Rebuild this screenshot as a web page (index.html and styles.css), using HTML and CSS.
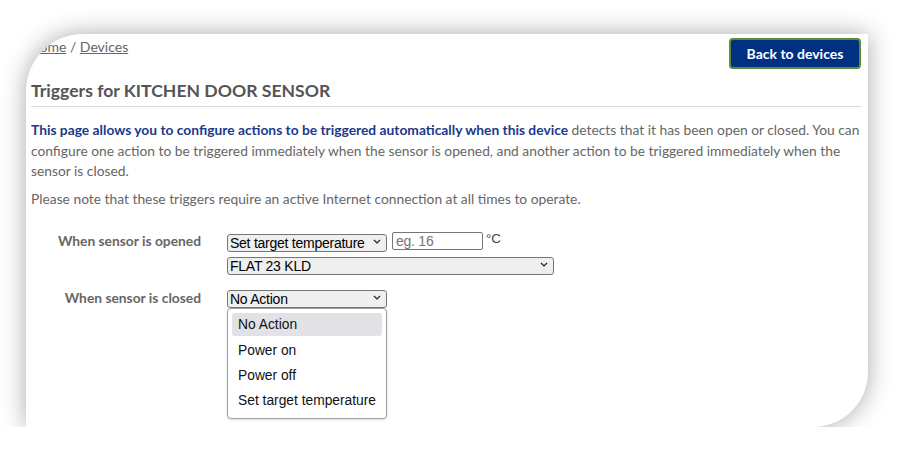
FILE: index.html
```html
<!DOCTYPE html>
<html lang="en">
<head>
<meta charset="utf-8">
<title>Triggers for KITCHEN DOOR SENSOR</title>
<link rel="stylesheet" href="styles.css">
</head>
<body>
<div class="card">
  <div class="topbar">
    <nav class="crumbs"><a href="#">Home</a> / <a href="#">Devices</a></nav>
    <button class="back" type="button">Back to devices</button>
  </div>
  <h1 class="title">Triggers for KITCHEN DOOR SENSOR</h1>
  <p class="intro"><strong>This page allows you to configure actions to be triggered automatically when this device</strong> detects that it has been open or closed. You can configure one action to be triggered immediately when the sensor is opened, and another action to be triggered immediately when the sensor is closed.</p>
  <p class="note">Please note that these triggers require an active Internet connection at all times to operate.</p>

  <div class="form">
    <label class="lbl">When sensor is opened</label>
    <div class="fields">
      <div class="line">
        <span class="sel w160"><select><option>Set target temperature</option></select><svg class="chev" viewBox="0 0 8 5" width="8" height="5"><path d="M1 1l3 3 3-3" fill="none" stroke="#222" stroke-width="1.2"/></svg></span>
        <input class="num" type="text" placeholder="eg. 16">
        <span class="unit">°C</span>
      </div>
      <span class="sel w327"><select><option>FLAT 23 KLD</option></select><svg class="chev" viewBox="0 0 8 5" width="8" height="5"><path d="M1 1l3 3 3-3" fill="none" stroke="#222" stroke-width="1.2"/></svg></span>
    </div>

    <label class="lbl second">When sensor is closed</label>
    <div class="fields second">
      <div class="dropwrap">
        <span class="sel w160"><select><option>No Action</option></select><svg class="chev" viewBox="0 0 8 5" width="8" height="5"><path d="M1 1l3 3 3-3" fill="none" stroke="#222" stroke-width="1.2"/></svg></span>
        <ul class="menu">
          <li class="active">No Action</li>
          <li>Power on</li>
          <li>Power off</li>
          <li>Set target temperature</li>
        </ul>
      </div>
    </div>
  </div>
</div>
</body>
</html>
```

FILE: styles.css
```css
html, body {
  margin: 0;
  background: #ffffff;
}
body {
  padding: 34px 0 0 26px;
  font-family: "Lato", "Open Sans", sans-serif;
}
.card {
  width: 842px;
  height: 393px;
  box-sizing: border-box;
  background: #fff;
  border-radius: 57px 0 55px 0;
  overflow: hidden;
  box-shadow: 0 0 24px rgba(0,0,0,0.34);
  padding: 4px 7px 0 5px;
  color: #666;
}
.topbar {
  display: flex;
  justify-content: space-between;
  align-items: flex-start;
}
.crumbs {
  font-size: 14px;
  color: #666;
  margin-left: -2px;
}
.crumbs a {
  color: #666;
  text-decoration: underline;
}
.back {
  width: 132px;
  height: 31px;
  background: #003082;
  color: #fff;
  border: 2px solid #5d8b3a;
  border-radius: 4px;
  font-family: "Lato", sans-serif;
  font-weight: 700;
  font-size: 14px;
  padding: 0;
}
.title {
  font-size: 17.6px;
  font-weight: 700;
  color: #555;
  margin: 11px 0 0;
  padding-bottom: 5px;
  border-bottom: 1px solid #d8d8d8;
}
.intro {
  font-size: 13.8px;
  line-height: 20.5px;
  margin: 13px 0 0;
}
.intro strong {
  color: #1a3a8c;
}
.note {
  font-size: 13.8px;
  line-height: 20px;
  margin: 7px 0 0;
}
.form {
  display: grid;
  grid-template-columns: 170px auto;
  column-gap: 26px;
  margin-top: 23px;
}
.lbl {
  text-align: right;
  font-weight: 700;
  font-size: 13.8px;
  color: #666;
  line-height: 18px;
}
.lbl.second, .fields.second {
  margin-top: 15px;
}
.lbl.second {
  margin-top: 16px;
}
.fields {
  display: flex;
  flex-direction: column;
  gap: 5px;
  align-items: flex-start;
}
.line {
  display: flex;
  align-items: flex-start;
  gap: 5px;
}
.sel {
  position: relative;
  display: inline-block;
  height: 18px;
}
.sel select {
  appearance: none;
  -webkit-appearance: none;
  box-sizing: border-box;
  height: 18px;
  width: 100%;
  border: 1px solid #767676;
  border-radius: 3px;
  background: #efefef;
  font-family: "Liberation Sans", Arial, sans-serif;
  font-size: 14px;
  letter-spacing: -0.25px;
  color: #000;
  padding: 0 0 0 2px;
  margin: 0;
  line-height: 16px;
}
.w160 { width: 160px; }
.w327 { width: 327px; }
.chev {
  position: absolute;
  right: 6px;
  top: 7px;
}
.num {
  box-sizing: border-box;
  width: 91px;
  height: 18px;
  border: 1px solid #767676;
  border-radius: 2px;
  padding: 0 3px;
  font-family: "Liberation Sans", Arial, sans-serif;
  font-size: 14px;
  letter-spacing: -0.25px;
  margin: 0;
}
.num::placeholder { color: #757575; }
.unit {
  font-family: "Liberation Sans", Arial, sans-serif;
  font-size: 13.3px;
  color: #444;
  margin-left: -2px;
  line-height: 14px;
}
.dropwrap {
  position: relative;
}
.menu {
  position: absolute;
  left: 0;
  top: 20px;
  width: 160px;
  box-sizing: border-box;
  margin: 0;
  padding: 4px 4px 5px;
  list-style: none;
  background: #fff;
  border: 1px solid #a0a0a0;
  border-radius: 4px;
  box-shadow: 0 1px 3px rgba(0,0,0,0.15);
  font-family: "Liberation Sans", Arial, sans-serif;
  font-size: 13.8px;
  color: #111;
}
.menu li {
  height: 25px;
  line-height: 25px;
  padding-left: 6px;
  border-radius: 3px;
}
.menu li.active {
  background: #e1e1e6;
  height: 23px;
  line-height: 23px;
  margin-bottom: 2px;
}
```
